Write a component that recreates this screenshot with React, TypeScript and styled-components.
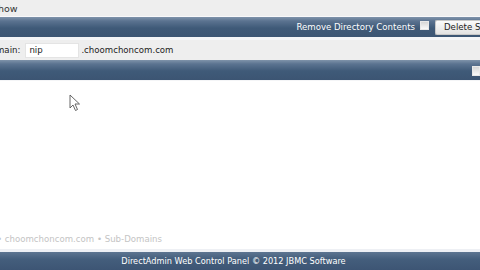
import React from 'react';
import styled, { createGlobalStyle } from 'styled-components';

const Global = createGlobalStyle`
  html, body {
    margin: 0;
    padding: 0;
    background: #ffffff;
    font-family: "DejaVu Sans", Verdana, sans-serif;
    overflow: hidden;
  }
`;

const Page = styled.div`
  width: 480px;
  height: 270px;
  display: flex;
  flex-direction: column;
  overflow: hidden;
`;

const TopStrip = styled.div`
  height: 16px;
  background: #eeeeee;
  border-bottom: 1px solid #f8f8fa;
  font-size: 9.5px;
  color: #333;
  display: flex;
  align-items: center;
  margin-left: -2px;
`;

const Bar = styled.div<{ $gap?: number }>`
  height: 20px;
  background: linear-gradient(#7f93aa 0%, #5b7390 20%, #3f5a78 55%, #3c5573 100%);
  display: flex;
  align-items: center;
  justify-content: flex-end;
  color: #ffffff;
  font-size: 8.6px;
  border-bottom: ${(p) => p.$gap ?? 1}px solid #f4f5f7;
`;

const BarLabel = styled.span`
  margin-right: 5px;
`;

const Check = styled.span<{ $edge?: boolean }>`
  width: ${(p) => (p.$edge ? 8 : 9)}px;
  height: ${(p) => (p.$edge ? 10 : 9)}px;
  background: linear-gradient(#d6d6d6, #fafafa);
  border: 1px solid #e8e8e8;
  box-sizing: border-box;
  margin-right: ${(p) => (p.$edge ? 0 : 6)}px;
  margin-top: ${(p) => (p.$edge ? 1 : -3)}px;
`;

const Button = styled.button`
  height: 15px;
  padding: 0 4px 0 8px;
  border: 1px solid #c8c8c8;
  border-right: none;
  border-radius: 2px 0 0 2px;
  background: linear-gradient(#fbfbfb, #e2e2e2);
  font-family: "DejaVu Sans", Verdana, sans-serif;
  font-size: 8.6px;
  color: #222;
  white-space: nowrap;
  width: 45px;
  overflow: hidden;
  text-align: left;
`;

const FormRow = styled.div`
  height: 20px;
  background: #eeeeee;
  display: flex;
  align-items: center;
  font-size: 8.6px;
  color: #222;
  margin-left: -4px;
`;

const Input = styled.span`
  width: 54px;
  height: 15px;
  background: #ffffff;
  border: 1px solid #e4e4e4;
  margin: 0 2px 0 5px;
  box-sizing: border-box;
  padding-left: 3px;
  display: flex;
  align-items: center;
`;

const Content = styled.div`
  flex: 1;
  position: relative;
  background: #ffffff;
  display: flex;
  flex-direction: column;
  justify-content: flex-end;
`;

const Crumbs = styled.div`
  font-size: 8.6px;
  color: #c4c4c4;
  padding: 0 0 5px 0;
  margin-left: -3px;
  border-bottom: 3px solid #eef0f4;
`;

const Cursor = styled.svg`
  position: absolute;
  left: 69px;
  top: 13px;
`;

const Footer = styled.div`
  height: 18px;
  background: linear-gradient(#5d7591 0%, #445e7c 40%, #3d5574 100%);
  color: #ffffff;
  font-size: 8.2px;
  display: flex;
  align-items: center;
  justify-content: center;
  padding-right: 13px;
`;

export default function App() {
  return (
    <Page>
      <Global />
      <TopStrip>how</TopStrip>
      <Bar $gap={3}>
        <BarLabel>Remove Directory Contents</BarLabel>
        <Check />
        <Button>Delete Selected</Button>
      </Bar>
      <FormRow>
        main:
        <Input>nip</Input>
        .choomchoncom.com
      </FormRow>
      <Bar>
        <Check $edge />
      </Bar>
      <Content>
        <Cursor width="12" height="18" viewBox="0 0 12 18">
          <path d="M1 1 L1 14 L4 11 L6.5 16.5 L8.5 15.5 L6 10 L10.5 10 Z" fill="#ffffff" stroke="#555" strokeWidth="0.9" />
        </Cursor>
        <Crumbs>• choomchoncom.com • Sub-Domains</Crumbs>
      </Content>
      <Footer>DirectAdmin Web Control Panel © 2012 JBMC Software</Footer>
    </Page>
  );
}
